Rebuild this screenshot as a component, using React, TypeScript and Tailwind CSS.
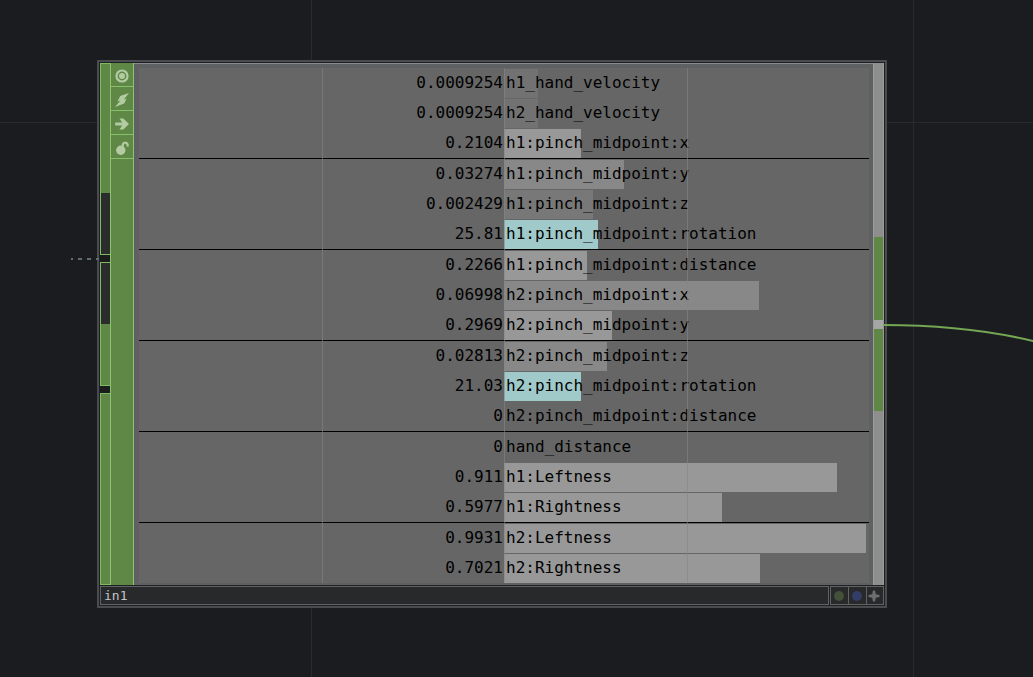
import type { ReactNode } from 'react'

type Channel = {
    name: string
    value: string
    level: number
    color: string
}

const groups: Channel[][] = [
    [
        { name: 'h1_hand_velocity', value: '0.0009254', level: 9.25, color: 'bg-[#727272]' },
        { name: 'h2_hand_velocity', value: '0.0009254', level: 9.25, color: 'bg-[#727272]' },
        { name: 'h1:pinch_midpoint:x', value: '0.2104', level: 21.04, color: 'bg-[#989898]' },
    ],
    [
        { name: 'h1:pinch_midpoint:y', value: '0.03274', level: 32.74, color: 'bg-[#888888]' },
        { name: 'h1:pinch_midpoint:z', value: '0.002429', level: 24.29, color: 'bg-[#787878]' },
        { name: 'h1:pinch_midpoint:rotation', value: '25.81', level: 25.81, color: 'bg-[#a0caca]' },
    ],
    [
        { name: 'h1:pinch_midpoint:distance', value: '0.2266', level: 22.66, color: 'bg-[#989898]' },
        { name: 'h2:pinch_midpoint:x', value: '0.06998', level: 69.98, color: 'bg-[#888888]' },
        { name: 'h2:pinch_midpoint:y', value: '0.2969', level: 29.69, color: 'bg-[#989898]' },
    ],
    [
        { name: 'h2:pinch_midpoint:z', value: '0.02813', level: 28.13, color: 'bg-[#888888]' },
        { name: 'h2:pinch_midpoint:rotation', value: '21.03', level: 21.03, color: 'bg-[#a0caca]' },
        { name: 'h2:pinch_midpoint:distance', value: '0', level: 0, color: 'bg-[#989898]' },
    ],
    [
        { name: 'hand_distance', value: '0', level: 0, color: 'bg-[#989898]' },
        { name: 'h1:Leftness', value: '0.911', level: 91.1, color: 'bg-[#989898]' },
        { name: 'h1:Rightness', value: '0.5977', level: 59.77, color: 'bg-[#989898]' },
    ],
    [
        { name: 'h2:Leftness', value: '0.9931', level: 99.31, color: 'bg-[#989898]' },
        { name: 'h2:Rightness', value: '0.7021', level: 70.21, color: 'bg-[#989898]' },
    ],
]

const FlagButton = ({ label, children }: { label: string; children: ReactNode }) => (
    <button
        type="button"
        aria-label={label}
        className="flex h-6 w-full items-end justify-center border-b border-[#86c168] pb-[2px] text-[#b3cba2]"
    >
        <svg viewBox="0 0 16 16" className="h-4 w-4" fill="currentColor">
            {children}
        </svg>
    </button>
)

const Flags = () => (
    <div className="w-6 border-x border-[#8cc472] bg-[#5f8745]">
        <FlagButton label="Viewer">
            <circle cx="8" cy="8" r="5.5" fill="none" stroke="currentColor" strokeWidth="2.2" />
            <circle cx="8" cy="8" r="3" />
        </FlagButton>
        <FlagButton label="Cook">
            <path d="M15 1 L6.2 4 L3.4 9.6 L6.4 8.6 L1 15 L10.2 11.6 L12.6 6.6 L9.8 7.4 Z" />
        </FlagButton>
        <FlagButton label="Bypass">
            <path d="M1.2 6.6 H8.2 L5.4 2.6 H9.4 L15 8 L9.4 13.4 H5.4 L8.2 9.4 H1.2 Z" />
        </FlagButton>
        <FlagButton label="Lock">
            <circle cx="6.8" cy="10.2" r="4.7" />
            <path d="M8.8 6.5 V4.4 A2.5 2.5 0 0 1 13.6 4.4 V6.4" fill="none" stroke="currentColor" strokeWidth="2.2" />
        </FlagButton>
    </div>
)

const Inputs = () => (
    <div className="flex w-[10px] flex-col gap-[7px] bg-[#1b1c1e]">
        <div className="flex flex-48 flex-col border-t border-b border-l border-[#7fbb62] bg-[#2b2c2c]">
            <div className="h-[68%] bg-[#5f8745]" />
        </div>
        <div className="flex flex-31 flex-col justify-end border-t border-b border-l border-[#7fbb62] bg-[#2b2c2c]">
            <div className="h-1/2 bg-[#5f8745]" />
        </div>
        <div className="flex-48 border-t border-b border-l border-[#7fbb62] bg-[#5f8745]" />
    </div>
)

const ChannelRow = ({ channel }: { channel: Channel }) => (
    <li className="grid h-[30px] grid-cols-2 items-center">
        <span className="pr-[1px] text-right">{channel.value}</span>
        <span className="relative flex h-full items-center">
            <span
                className={`absolute top-[1px] bottom-0 left-0 ${channel.color}`}
                style={{ width: `${channel.level}%` }}
            />
            <span className="relative pl-[2px] whitespace-nowrap">{channel.name}</span>
        </span>
    </li>
)

const Viewer = () => (
    <div className="flex-1 border-t border-[#8a8b8c] bg-[#5f6062] pt-1 pr-1 pb-[2px] pl-[5px]">
        <div className="relative bg-[#666666]">
            {groups.map((group, i) => (
                <ul key={i} className="border-b border-black last-of-type:border-b-0">
                    {group.map((channel) => (
                        <ChannelRow key={channel.name} channel={channel} />
                    ))}
                </ul>
            ))}
            {/* quarter lines */}
            <div className="pointer-events-none absolute inset-0 grid grid-cols-4">
                <div />
                <div className="border-l border-[#868686]/60" />
                <div className="border-l border-[#868686]/60" />
                <div className="border-l border-[#868686]/60" />
            </div>
        </div>
    </div>
)

const Output = () => (
    <div className="flex w-[11px] flex-col justify-center border-x border-[#9b9b9b] bg-[#8e8e8e]">
        <div className="flex h-1/3 flex-col justify-center bg-[#5f8745]">
            <div className="relative h-[9px] bg-[#a6a6a6]">
                <svg
                    viewBox="0 0 200 60"
                    className="absolute top-0 left-full h-[60px] w-[200px]"
                    fill="none"
                    stroke="#74a654"
                    strokeWidth="2"
                >
                    <path d="M0 5 C50 5 100 9 150 21 S190 32 200 36" />
                </svg>
            </div>
        </div>
    </div>
)

const Footer = () => (
    <div className="flex h-[19px] gap-[1px]">
        <input
            aria-label="Operator name"
            defaultValue="in1"
            className="min-w-0 flex-1 border border-[#606264] bg-[#27292b] px-[3px] text-[13px] leading-4 text-[#c4c5c6] outline-none"
        />
        <div className="flex border border-[#606264] bg-[#27292b]">
            <button type="button" aria-label="Compare" className="flex w-[18px] items-center justify-center border-r border-[#606264] pr-[2px]">
                <span className="h-[10px] w-[10px] rounded-full bg-[#43503a]" />
            </button>
            <button type="button" aria-label="Display" className="flex w-[18px] items-center justify-center border-r border-[#606264] pr-[2px]">
                <span className="h-[10px] w-[10px] rounded-full bg-[#323e68]" />
            </button>
            <button type="button" aria-label="Activate viewer" className="flex w-4 items-center justify-center pr-[2px] text-[#6c6e70]">
                <svg viewBox="0 0 12 12" className="h-3 w-3" fill="currentColor">
                    <path d="M5 0.5 H7 L7.8 4.2 L11.5 5 V7 L7.8 7.8 L7 11.5 H5 L4.2 7.8 L0.5 7 V5 L4.2 4.2 Z" />
                </svg>
            </button>
        </div>
    </div>
)

const OperatorNode = () => (
    <section className="relative flex min-w-0 flex-1 flex-col border-2 border-[#4a4b4e] bg-[#1f2022] p-[1px]">
        <div className="flex">
            <Inputs />
            <Flags />
            <Viewer />
            <Output />
        </div>
        <div className="pt-[1px]">
            <Footer />
        </div>
        {/* incoming wire */}
        <svg
            viewBox="0 0 28 2"
            className="absolute top-[196px] right-full h-[2px] w-7"
            stroke="#5d706c"
            strokeWidth="2"
        >
            <path d="M0 1 H28" strokeDasharray="4 5" strokeDashoffset="2" />
        </svg>
    </section>
)

const App = () => {
    return (
        <main className="relative flex min-h-screen items-start overflow-hidden bg-[#1b1c20] pt-[60px] pr-[146px] pb-[70px] pl-[97px] font-['DejaVu_Sans_Mono',monospace] text-base leading-6 text-black">
            {/* network grid */}
            <div className="absolute inset-y-0 left-[311px] w-px bg-[#292a2e]" />
            <div className="absolute inset-y-0 left-[913px] w-px bg-[#292a2e]" />
            <div className="absolute inset-x-0 top-[122px] h-px bg-[#292a2e]" />
            <OperatorNode />
        </main>
    )
}

export default App
